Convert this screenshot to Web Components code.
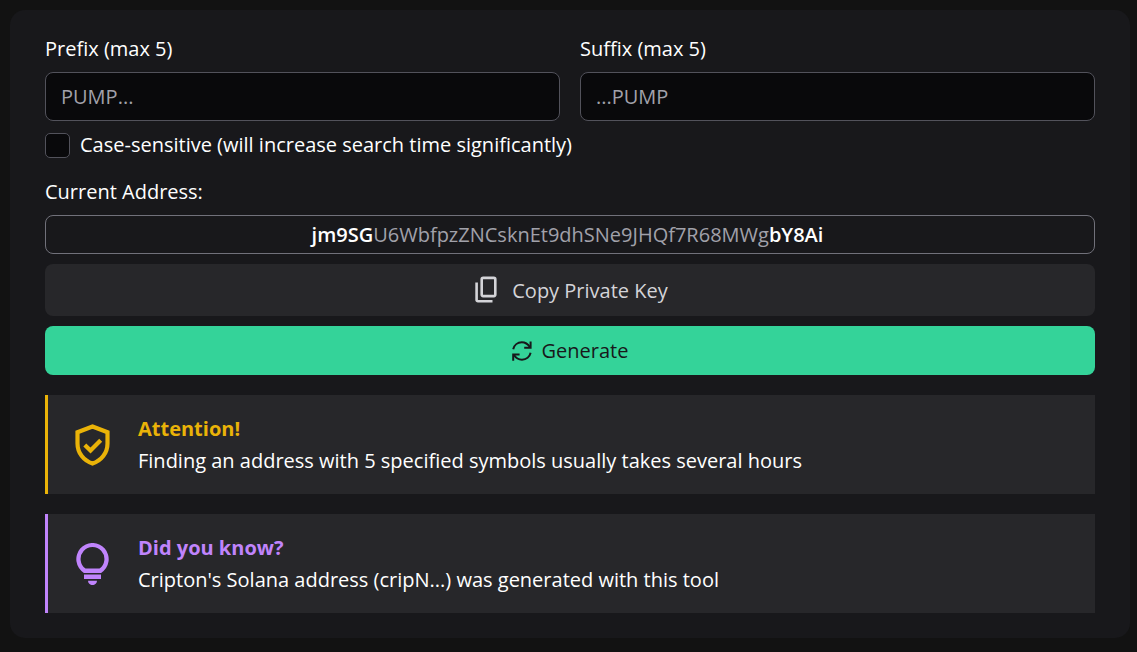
<!DOCTYPE html>
<html lang="en">
<head>
<meta charset="utf-8">
<meta name="viewport" content="width=device-width, initial-scale=1">
<title>Solana vanity address generator</title>
<style>
  body {
    margin: 0;
    padding: 10px 7px 14px 10px;
    background: #121212;
    color: #fff;
    font: 20px/27px "Open Sans", "Noto Sans", sans-serif;
  }
</style>
</head>
<body>
<vanity-generator></vanity-generator>

<script>
  const define = (name, html, setup) => {
    const template = document.createElement('template');
    template.innerHTML = html;
    customElements.define(name, class extends HTMLElement {
      constructor() {
        super();
        this.attachShadow({ mode: 'open' }).append(template.content.cloneNode(true));
      }
      connectedCallback() {
        if (setup) setup(this, this.shadowRoot);
      }
    });
  };

  define('text-field', `
    <style>
      :host { display: block; flex: 1; min-width: 0; }
      label { display: block; margin-bottom: 10px; }
      input {
        display: block; box-sizing: border-box; width: 100%; height: 49px;
        padding: 0 15px; border: 1px solid #52525b; border-radius: 8px;
        background: #09090b; color: inherit; font: inherit;
      }
      input::placeholder { color: #a1a1aa; opacity: 1; }
    </style>
    <label for="field"><slot></slot></label>
    <input id="field" type="text" maxlength="5">
  `, (host, root) => {
    root.querySelector('input').placeholder = host.getAttribute('placeholder');
  });

  define('check-option', `
    <style>
      :host { display: block; }
      label { display: flex; align-items: flex-start; gap: 10px; line-height: 23px; }
      input {
        appearance: none; flex: none; width: 25px; height: 25px; margin: 0;
        border: 1px solid #52525b; border-radius: 5px; background: #09090b;
      }
      input:checked { background: #34d399; }
    </style>
    <label><input type="checkbox"><span><slot></slot></span></label>
  `);

  define('address-view', `
    <style>
      :host { display: block; }
      .title { margin-bottom: 10px; }
      .address {
        padding: 5px 15px 5px 10px; border: 1px solid #71717a; border-radius: 8px;
        color: #a1a1aa; text-align: center; overflow-wrap: anywhere;
      }
      ::slotted(b) { color: #fff; font-weight: 600; }
    </style>
    <div class="title">Current Address:</div>
    <div class="address"><slot></slot></div>
  `);

  define('action-button', `
    <style>
      :host { display: block; }
      button {
        display: flex; align-items: center; justify-content: center; gap: 10px;
        width: 100%; height: 52px; padding: 0 20px; border: 0; border-radius: 8px;
        background: #27272a; color: #d4d4d8; font: inherit; cursor: pointer;
      }
      :host([primary]) button {
        height: 49px; background: #34d399; color: #18181b; font-weight: 500;
      }
    </style>
    <button type="button"><slot name="icon"></slot><span><slot></slot></span></button>
  `);

  define('info-note', `
    <style>
      :host {
        display: flex; align-items: center; gap: 24px;
        padding: 20px 24px;
        border-left: 3px solid var(--accent); background: #27272a;
      }
      ::slotted(svg) { flex: none; color: var(--accent); }
      .title { margin-bottom: 5px; color: var(--accent); font-weight: 700; }
    </style>
    <slot name="icon"></slot>
    <div>
      <div class="title"><slot name="title"></slot></div>
      <div><slot></slot></div>
    </div>
  `);

  define('vanity-generator', `
    <style>
      :host {
        display: flex; flex-direction: column; gap: 20px;
        padding: 25px 35px; border-radius: 15px; background: #18181b;
      }
      .group { display: flex; flex-direction: column; gap: 10px; }
      .options { gap: 12px; }
      .fields { display: flex; gap: 20px; }
      .warning { --accent: #eab308; }
      .fact { --accent: #c084fc; }
      svg { display: block; }
    </style>
    <div class="group options">
      <div class="fields">
        <text-field placeholder="PUMP...">Prefix (max 5)</text-field>
        <text-field placeholder="...PUMP">Suffix (max 5)</text-field>
      </div>
      <check-option>Case-sensitive (will increase search time significantly)</check-option>
    </div>
    <div class="group">
      <address-view><b>jm9SG</b>U6WbfpzZNCsknEt9dhSNe9JHQf7R68MWg<b>bY8Ai</b></address-view>
      <action-button>
        <svg slot="icon" width="30" height="30" viewBox="0 0 30 30" fill="none" stroke="currentColor" stroke-width="2.6" aria-hidden="true">
          <rect x="9.7" y="2.900" width="13.6" height="18.200" rx="1.5"/>
          <path d="M4.6 7.500v17.500a1.300 1.300 0 0 0 1.300 1.300H20.500"/>
        </svg>
        Copy Private Key
      </action-button>
      <action-button primary>
        <svg slot="icon" width="20" height="20" viewBox="0 0 20 20" fill="none" stroke="currentColor" stroke-width="2" aria-hidden="true">
          <path d="M1.200 8.200C2.100 4 5.600 1.300 9.800 1.300c3.200 0 6 1.600 8.200 5"/>
          <path d="M18.600.4v6.400h-6.400"/>
          <path d="M18.600 11.800c-.9 4.200-4.400 6.900-8.600 6.900-3.200 0-6-1.600-8.200-5"/>
          <path d="M1.200 19.800v-6.400h6.400"/>
        </svg>
        Generate
      </action-button>
    </div>
    <info-note class="warning">
      <svg slot="icon" width="42" height="42" viewBox="0 0 42 42" fill="none" stroke="currentColor" stroke-width="4.2" aria-hidden="true">
        <path d="M20.500 2.500 35.500 8.200v11.200c0 9.600-6.300 17.300-15 20.100-8.700-2.800-15-10.500-15-20.100V8.200z"/>
        <path d="m12.800 20.900 5.700 5.600 10.200-10.300"/>
      </svg>
      <span slot="title">Attention!</span>
      Finding an address with 5 specified symbols usually takes several hours
    </info-note>
    <info-note class="fact">
      <svg slot="icon" width="42" height="42" viewBox="0 0 42 42" fill="currentColor" aria-hidden="true">
        <path fill-rule="evenodd" d="M11.900 29.900A16.200 16.200 0 1 1 29.100 29.900zM13.500 25.600h14a11.900 11.900 0 1 0-14 0z"/>
        <path d="M12 31.500h17v4.500h-17zM16 37.800h9a4.500 4.300 0 0 1-9 0z"/>
      </svg>
      <span slot="title">Did you know?</span>
      Cripton's Solana address (cripN...) was generated with this tool
    </info-note>
  `);
</script>
</body>
</html>
